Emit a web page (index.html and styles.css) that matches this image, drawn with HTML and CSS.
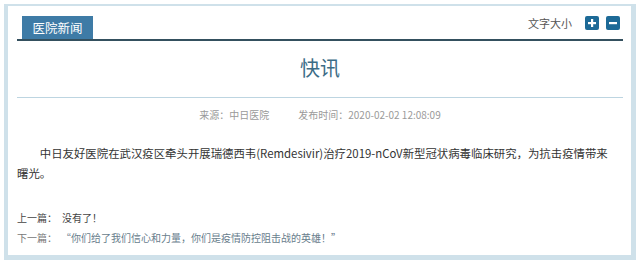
FILE: index.html
```html
<!DOCTYPE html>
<html lang="zh-CN">
<head>
<meta charset="utf-8">
<title>快讯</title>
<link rel="stylesheet" href="styles.css">
</head>
<body>
<div class="frame">
  <div class="header">
    <div class="tab">医院新闻</div>
    <div class="tools">
      <span class="tools-label">文字大小</span>
      <span class="btn">
        <svg width="14" height="14" viewBox="0 0 14 14"><rect width="14" height="14" rx="2" fill="#1d6a97"/><rect x="6" y="3" width="2.2" height="8" fill="#fff"/><rect x="3" y="6" width="8" height="2.2" fill="#fff"/></svg>
      </span>
      <span class="btn">
        <svg width="14" height="14" viewBox="0 0 14 14"><rect width="14" height="14" rx="2" fill="#1d6a97"/><rect x="3" y="6" width="8" height="2.2" fill="#fff"/></svg>
      </span>
    </div>
  </div>
  <h1 class="title">快讯</h1>
  <div class="meta"><span>来源：中日医院</span><span class="meta-time">发布时间：2020-02-02 12:08:09</span></div>
  <p class="content">中日友好医院在武汉疫区牵头开展瑞德西韦(Remdesivir)治疗2019-nCoV新型冠状病毒临床研究，为抗击疫情带来曙光。</p>
  <div class="nav">
    <div class="nav-row prev"><span class="nav-label">上一篇：</span><span class="nav-text">没有了！</span></div>
    <div class="nav-row next"><span class="nav-label">下一篇：</span><a class="nav-link" href="#">“你们给了我们信心和力量，你们是疫情防控阻击战的英雄！”</a></div>
  </div>
</div>
</body>
</html>
```
FILE: styles.css
```css
html, body {
  margin: 0;
  padding: 0;
  background: #fff;
}
body {
  font-family: "Noto Sans CJK SC", "Noto Sans", sans-serif;
  color: #333;
}
.frame {
  box-sizing: border-box;
  margin: 4px 4px 0 4px;
  height: 256px;
  border-style: solid;
  border-color: #cfe1ea;
  border-width: 2px 5px 5px 4px;
  padding: 10px 8px 0 9px;
  background: #fff;
}
.header {
  display: flex;
  justify-content: space-between;
  align-items: flex-end;
  height: 23px;
  border-bottom: 2px solid #34505e;
}
.tab {
  margin-left: 5px;
  width: 71px;
  height: 23px;
  line-height: 23px;
  background: #3e7ba6;
  color: #fff;
  font-size: 12.5px;
  text-align: center;
}
.tools {
  align-self: flex-start;
  display: flex;
  align-items: center;
  height: 14px;
  padding-right: 3px;
}
.tools-label {
  font-size: 11px;
  color: #555;
  margin-right: 6px;
  line-height: 14px;
}
.btn {
  display: block;
  width: 14px;
  height: 14px;
  margin-left: 7px;
}
.btn:first-of-type { margin-left: 0; }
.btn svg { display: block; }
.title {
  margin: 0;
  padding: 17px 0 19px;
  font-size: 20px;
  line-height: 20px;
  font-weight: normal;
  text-align: center;
  color: #3c6c86;
  border-bottom: 1px solid #bdd5e1;
}
.meta {
  padding-top: 9px;
  font-size: 10px;
  line-height: 16px;
  color: #9a9a9a;
  text-align: center;
}
.meta-time { margin-left: 29px; }
.content {
  margin: 20px 0 0;
  padding-right: 6px;
  font-size: 11.4px;
  line-height: 20px;
  text-indent: 2em;
  color: #333;
}
.nav {
  margin-top: 25px;
  font-size: 10px;
  line-height: 20px;
}
.nav-row { display: flex; }
.prev .nav-label { color: #444; }
.prev .nav-text { color: #444; margin-left: 5px; }
.next .nav-label { color: #777; }
.nav-link {
  color: #687d8c;
  text-decoration: none;
  margin-left: 4px;
}
```
